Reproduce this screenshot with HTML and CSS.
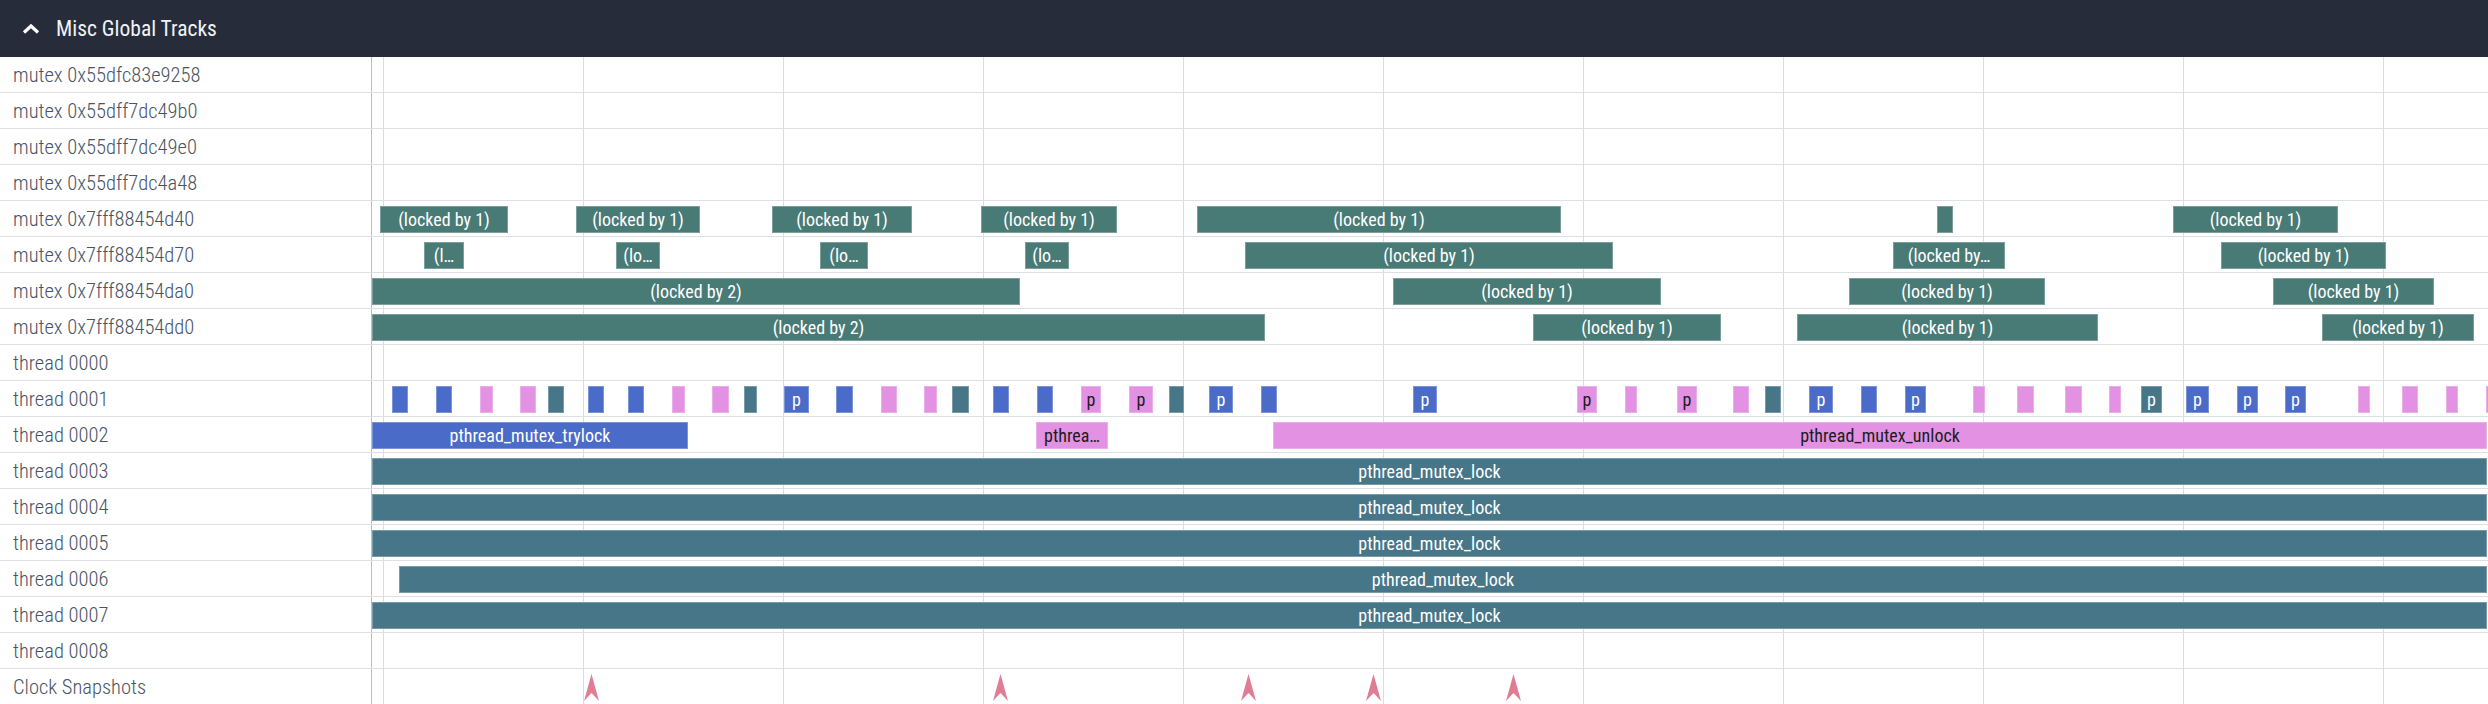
FILE: index.html
```html
<!DOCTYPE html>
<html>
<head>
<meta charset="utf-8">
<title>Misc Global Tracks</title>
<link rel="stylesheet" href="styles.css">
</head>
<body>
<div class="panel">
  <div class="header">
    <svg class="chev" width="18" height="12" viewBox="0 0 18 12"><path d="M2 9.5 L9 3 L16 9.5" fill="none" stroke="#ffffff" stroke-width="3.2"/></svg>
    <span class="title">Misc Global Tracks</span>
  </div>

  <div class="row"><div class="label">mutex 0x55dfc83e9258</div><div class="track"></div></div>
  <div class="row"><div class="label">mutex 0x55dff7dc49b0</div><div class="track"></div></div>
  <div class="row"><div class="label">mutex 0x55dff7dc49e0</div><div class="track"></div></div>
  <div class="row"><div class="label">mutex 0x55dff7dc4a48</div><div class="track"></div></div>

  <div class="row"><div class="label">mutex 0x7fff88454d40</div><div class="track">
    <div class="s m" style="left:8px;width:128px">(locked by 1)</div>
    <div class="s m" style="left:204px;width:124px">(locked by 1)</div>
    <div class="s m" style="left:400px;width:140px">(locked by 1)</div>
    <div class="s m" style="left:609px;width:136px">(locked by 1)</div>
    <div class="s m" style="left:825px;width:364px">(locked by 1)</div>
    <div class="s m" style="left:1565px;width:16px"></div>
    <div class="s m" style="left:1801px;width:165px">(locked by 1)</div>
  </div></div>

  <div class="row"><div class="label">mutex 0x7fff88454d70</div><div class="track">
    <div class="s m" style="left:52px;width:40px">(l…</div>
    <div class="s m" style="left:244px;width:44px">(lo…</div>
    <div class="s m" style="left:448px;width:48px">(lo…</div>
    <div class="s m" style="left:653px;width:44px">(lo…</div>
    <div class="s m" style="left:873px;width:368px">(locked by 1)</div>
    <div class="s m" style="left:1521px;width:112px">(locked by…</div>
    <div class="s m" style="left:1849px;width:165px">(locked by 1)</div>
  </div></div>

  <div class="row"><div class="label">mutex 0x7fff88454da0</div><div class="track">
    <div class="s m" style="left:0px;width:648px">(locked by 2)</div>
    <div class="s m" style="left:1021px;width:268px">(locked by 1)</div>
    <div class="s m" style="left:1477px;width:196px">(locked by 1)</div>
    <div class="s m" style="left:1901px;width:161px">(locked by 1)</div>
  </div></div>

  <div class="row"><div class="label">mutex 0x7fff88454dd0</div><div class="track">
    <div class="s m" style="left:0px;width:893px">(locked by 2)</div>
    <div class="s m" style="left:1161px;width:188px">(locked by 1)</div>
    <div class="s m" style="left:1425px;width:301px">(locked by 1)</div>
    <div class="s m" style="left:1950px;width:152px">(locked by 1)</div>
  </div></div>

  <div class="row"><div class="label">thread 0000</div><div class="track"></div></div>

  <div class="row"><div class="label">thread 0001</div><div class="track">
    <div class="s b" style="left:20px;width:16px"></div>
    <div class="s b" style="left:64px;width:16px"></div>
    <div class="s p" style="left:108px;width:13px"></div>
    <div class="s p" style="left:148px;width:16px"></div>
    <div class="s l" style="left:176px;width:16px"></div>
    <div class="s b" style="left:216px;width:16px"></div>
    <div class="s b" style="left:256px;width:16px"></div>
    <div class="s p" style="left:300px;width:13px"></div>
    <div class="s p" style="left:340px;width:17px"></div>
    <div class="s l" style="left:372px;width:13px"></div>
    <div class="s b" style="left:412px;width:25px">p</div>
    <div class="s b" style="left:464px;width:17px"></div>
    <div class="s p" style="left:509px;width:16px"></div>
    <div class="s p" style="left:552px;width:13px"></div>
    <div class="s l" style="left:580px;width:17px"></div>
    <div class="s b" style="left:621px;width:16px"></div>
    <div class="s b" style="left:665px;width:16px"></div>
    <div class="s p" style="left:709px;width:20px">p</div>
    <div class="s p" style="left:757px;width:24px">p</div>
    <div class="s l" style="left:797px;width:15px"></div>
    <div class="s b" style="left:837px;width:24px">p</div>
    <div class="s b" style="left:889px;width:16px"></div>
    <div class="s b" style="left:1041px;width:24px">p</div>
    <div class="s p" style="left:1205px;width:20px">p</div>
    <div class="s p" style="left:1253px;width:12px"></div>
    <div class="s p" style="left:1305px;width:20px">p</div>
    <div class="s p" style="left:1361px;width:16px"></div>
    <div class="s l" style="left:1393px;width:16px"></div>
    <div class="s b" style="left:1437px;width:24px">p</div>
    <div class="s b" style="left:1489px;width:16px"></div>
    <div class="s b" style="left:1533px;width:21px">p</div>
    <div class="s p" style="left:1601px;width:12px"></div>
    <div class="s p" style="left:1645px;width:17px"></div>
    <div class="s p" style="left:1693px;width:17px"></div>
    <div class="s p" style="left:1737px;width:12px"></div>
    <div class="s l" style="left:1769px;width:21px">p</div>
    <div class="s b" style="left:1814px;width:23px">p</div>
    <div class="s b" style="left:1865px;width:21px">p</div>
    <div class="s b" style="left:1913px;width:21px">p</div>
    <div class="s p" style="left:1986px;width:12px"></div>
    <div class="s p" style="left:2030px;width:16px"></div>
    <div class="s p" style="left:2074px;width:12px"></div>
    <div class="s p" style="left:2114px;width:12px"></div>
  </div></div>

  <div class="row"><div class="label">thread 0002</div><div class="track">
    <div class="s b" style="left:0px;width:316px">pthread_mutex_trylock</div>
    <div class="s p" style="left:664px;width:72px">pthrea…</div>
    <div class="s p" style="left:901px;width:1214px">pthread_mutex_unlock</div>
  </div></div>

  <div class="row"><div class="label">thread 0003</div><div class="track">
    <div class="s l" style="left:0px;width:2115px">pthread_mutex_lock</div>
  </div></div>
  <div class="row"><div class="label">thread 0004</div><div class="track">
    <div class="s l" style="left:0px;width:2115px">pthread_mutex_lock</div>
  </div></div>
  <div class="row"><div class="label">thread 0005</div><div class="track">
    <div class="s l" style="left:0px;width:2115px">pthread_mutex_lock</div>
  </div></div>
  <div class="row"><div class="label">thread 0006</div><div class="track">
    <div class="s l" style="left:27px;width:2088px">pthread_mutex_lock</div>
  </div></div>
  <div class="row"><div class="label">thread 0007</div><div class="track">
    <div class="s l" style="left:0px;width:2115px">pthread_mutex_lock</div>
  </div></div>
  <div class="row"><div class="label">thread 0008</div><div class="track"></div></div>

  <div class="row last"><div class="label">Clock Snapshots</div><div class="track">
    <svg class="snap" style="left:211.5px" width="15" height="27" viewBox="0 0 15 27"><path d="M7.5 0 L15 27 L7.5 19 L0 27 Z"/></svg>
    <svg class="snap" style="left:620.5px" width="15" height="27" viewBox="0 0 15 27"><path d="M7.5 0 L15 27 L7.5 19 L0 27 Z"/></svg>
    <svg class="snap" style="left:868.5px" width="15" height="27" viewBox="0 0 15 27"><path d="M7.5 0 L15 27 L7.5 19 L0 27 Z"/></svg>
    <svg class="snap" style="left:993.5px" width="15" height="27" viewBox="0 0 15 27"><path d="M7.5 0 L15 27 L7.5 19 L0 27 Z"/></svg>
    <svg class="snap" style="left:1133.5px" width="15" height="27" viewBox="0 0 15 27"><path d="M7.5 0 L15 27 L7.5 19 L0 27 Z"/></svg>
  </div></div>
</div>
</body>
</html>
```

FILE: styles.css
```css
html, body {
  margin: 0;
  padding: 0;
  background: #ffffff;
}

body {
  width: 2488px;
  height: 704px;
  overflow: hidden;
  font-family: "Roboto Condensed", Roboto, "Liberation Sans Narrow", sans-serif;
  font-stretch: condensed;
}

.panel {
  display: flex;
  flex-direction: column;
  width: 2488px;
}

.header {
  height: 57px;
  flex: none;
  background: #262c3a;
  display: flex;
  align-items: center;
  box-sizing: border-box;
  padding-left: 22px;
  gap: 16px;
  color: #f0f2f5;
}

.chev {
  flex: none;
  margin-top: 1px;
}

.title {
  font-size: 21.5px;
  font-weight: 400;
  line-height: 1;
  margin-top: 1px;
}

.row {
  display: flex;
  height: 36px;
  flex: none;
  box-sizing: border-box;
  border-bottom: 1px solid #dcdfe4;
}

.label {
  width: 372px;
  flex: none;
  box-sizing: border-box;
  border-right: 1px solid #b8bfcc;
  padding-left: 13px;
  padding-top: 2px;
  font-size: 20.5px;
  font-weight: 300;
  line-height: 33px;
  color: #4a5362;
  white-space: nowrap;
  overflow: hidden;
}

.track {
  position: relative;
  flex: 1;
  overflow: hidden;
  background-image: repeating-linear-gradient(to right, #d9dce1 0, #d9dce1 1px, transparent 1px, transparent 200px);
  background-position: 11px 0;
}

.s {
  position: absolute;
  top: 5px;
  height: 27px;
  box-sizing: border-box;
  font-size: 18px;
  line-height: 27px;
  text-align: center;
  white-space: nowrap;
  overflow: hidden;
  color: #ffffff;
  box-shadow: inset 0 0 0 1px rgba(255, 255, 255, 0.28);
}

.m { background: #487a76; }
.l { background: #467688; }
.b { background: #4a6bc8; }
.p { background: #e291e3; color: #1c1c1c; }

.snap {
  position: absolute;
  top: 5px;
  fill: #e07d95;
}
```
